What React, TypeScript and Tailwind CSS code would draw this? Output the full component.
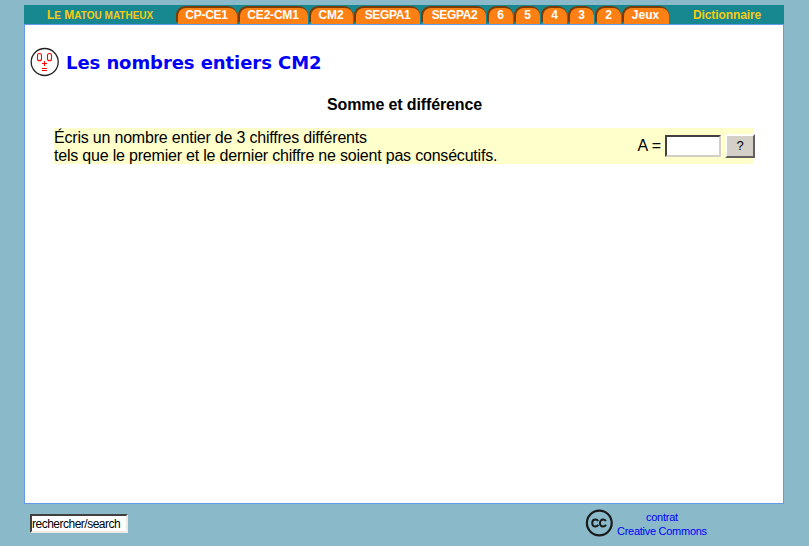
const tabs = [
  { label: 'CP-CE1', width: 'w-[62px]', text: 'pr-0.5 tracking-[-0.25px]' },
  { label: 'CE2-CM1', width: 'w-[71px]', text: 'pr-0.5 tracking-[-0.2px]' },
  { label: 'CM2', width: 'w-[45px]', text: 'pr-0.5 tracking-[-0.1px]' },
  { label: 'SEGPA1', width: 'w-[67px]', text: 'pr-px tracking-[-0.35px]' },
  { label: 'SEGPA2', width: 'w-[66px]', text: 'pr-0 tracking-[-0.35px]' },
  { label: '6', width: 'w-[27px]', text: 'pr-px' },
  { label: '5', width: 'w-[27px]', text: 'pr-px' },
  { label: '4', width: 'w-[27px]', text: 'pr-px' },
  { label: '3', width: 'w-[27px]', text: 'pr-px' },
  { label: '2', width: 'w-[27px]', text: 'pr-px' },
  { label: 'Jeux', width: 'w-[48px]', text: 'pr-0.5' },
];

function Tab({ label, width, text }: { label: string; width: string; text: string }) {
  return (
    <a className={`h-[18px] shrink-0 pr-px ${width}`}>
      <span className="block h-4 rounded-t-[9px] bg-[#783c08] pl-0.5 pt-0.5">
        <span
          className={`block h-4 rounded-t-[8px] bg-[#fc8014] text-center text-[12px] leading-[15px] font-bold text-white ${text}`}
        >
          {label}
        </span>
      </span>
    </a>
  );
}

function Face() {
  return (
    <svg width="30" height="30" viewBox="0 0 30 30" fill="none">
      <circle cx="14.7" cy="15" r="13.5" fill="#fff" stroke="#222" strokeWidth="1.3" />
      <g stroke="#ff0000" strokeWidth="1.1">
        <rect x="7.5" y="6.5" width="4" height="7.3" rx="2" />
        <rect x="17.5" y="6.5" width="4" height="7.3" rx="2" />
        <path d="M12 16.5h5M14.5 14v5M12 21.5h5M12 23.5h5" />
      </g>
    </svg>
  );
}

function CreativeCommons() {
  return (
    <svg width="28" height="28" viewBox="0 0 28 28" fill="none" stroke="#1a1a1a">
      <circle cx="14.3" cy="14" r="12.4" strokeWidth="2.2" />
      <path
        d="M13.2 12C12.5 10.8 11.4 10.5 10.4 10.5C8.3 10.5 7.2 12 7.2 14C7.2 16.1 8.4 17.5 10.4 17.5C11.7 17.5 12.7 16.9 13.3 15.8M20.9 12C20.2 10.8 19.1 10.5 18.1 10.5C16 10.5 14.9 12 14.9 14C14.9 16.1 16.1 17.5 18.1 17.5C19.4 17.5 20.4 16.9 21 15.8"
        strokeWidth="1.9"
      />
    </svg>
  );
}

export default function App() {
  return (
    <div className="h-[546px] w-[809px] overflow-hidden bg-[#8abaca] pl-6 pt-[5px] font-['Liberation_Sans',Arial,sans-serif] text-black">
      <nav className="flex h-[19px] w-[760px] bg-[#188890] pt-px text-[12px]">
        <div className="w-[152px] shrink-0 pl-[23px] text-[12px] leading-[19px] font-bold whitespace-nowrap text-[#f5cb10]">
          L<span className="text-[10px]">E</span> M<span className="text-[10px]">ATOU MATHEUX</span>
        </div>
        {tabs.map((tab) => (
          <Tab key={tab.label} {...tab} />
        ))}
        <a className="ml-[23px] leading-[19px] font-bold tracking-[-0.1px] text-[#f5cb10]">Dictionnaire</a>
      </nav>

      <main className="h-[480px] w-[760px] border border-[#6699e8] bg-white">
        <header className="flex h-[52px] items-start pl-[5px] pt-[22px]">
          <Face />
          <h1 className="ml-[6px] pt-px font-['DejaVu_Sans',sans-serif] text-[18px] leading-[30px] font-bold tracking-[-0.07px] whitespace-nowrap text-[#0000f8]">
            Les nombres entiers CM2
          </h1>
        </header>
        <h2 className="mt-[19px] pl-px text-center text-[16px] leading-[18px] font-bold tracking-[-0.13px]">
          Somme et différence
        </h2>
        <section className="mt-[14px] ml-[29px] flex h-9 w-[700px] items-center bg-[#ffffcc]">
          <p className="pt-0.5 text-[16px] leading-[18px] tracking-[-0.2px] whitespace-nowrap">
            Écris un nombre entier de 3 chiffres différents
            <br />
            tels que le premier et le dernier chiffre ne soient pas consécutifs.
          </p>
          <label className="ml-auto flex items-center text-[16px] whitespace-nowrap">
            A =
            <input
              className="ml-1 h-[22px] w-14 border-2 border-t-[#404040] border-r-[#d4d0c8] border-b-[#d4d0c8] border-l-[#404040] bg-white"
              aria-label="A"
            />
          </label>
          <button className="ml-1 -mr-px h-6 w-[30px] border-2 border-t-white border-r-[#606060] border-b-[#606060] border-l-white bg-[#d4d0c8] text-[13px] leading-5">
            ?
          </button>
        </section>
      </main>

      <footer className="flex items-start">
        <input
          className="mt-[10px] ml-[6px] h-[19px] w-[98px] border-2 border-t-[#404040] border-r-[#eeebe4] border-b-[#eeebe4] border-l-[#404040] bg-white text-[12px] tracking-[-0.5px]"
          defaultValue="rechercher/search"
          aria-label="rechercher"
        />
        <div className="mt-[5px] ml-[457px]">
          <CreativeCommons />
        </div>
        <a className="mt-[6px] ml-[4px] text-center text-[11px] leading-[14px] tracking-[-0.27px] whitespace-nowrap text-[#0000f8]">
          contrat
          <br />
          Creative Commons
        </a>
      </footer>
    </div>
  );
}
